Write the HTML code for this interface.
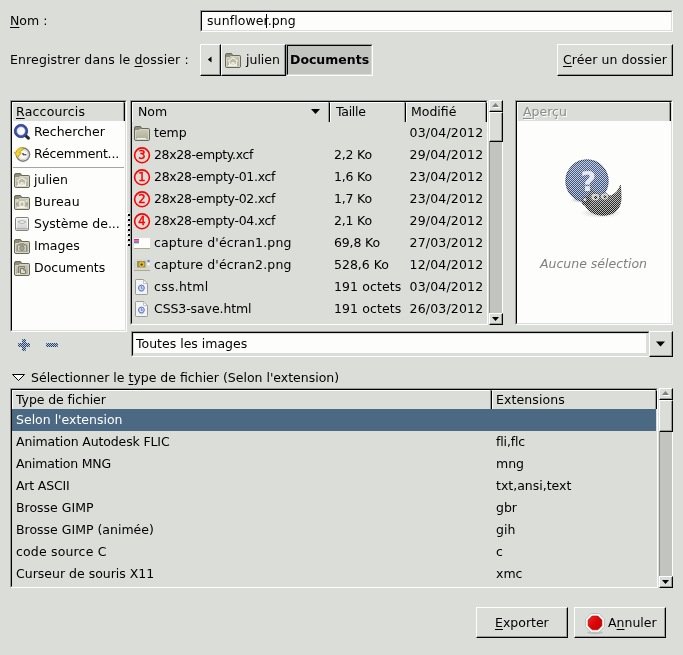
<!DOCTYPE html>
<html lang="fr"><head><meta charset="utf-8"><title>Exporter l'image</title>
<style>
html,body{margin:0;padding:0}
body{width:683px;height:655px;background:#dbddd8;overflow:hidden;position:relative;font:12.5px "DejaVu Sans","Liberation Sans",sans-serif;color:#000}
#w{position:absolute;left:0;top:0;width:683px;height:655px;will-change:transform}
.a{position:absolute;white-space:pre;line-height:16px;height:16px}
.box{position:absolute;box-sizing:border-box}
svg{position:absolute;overflow:visible}
u{text-decoration:underline;text-decoration-thickness:1px;text-underline-offset:2px;text-decoration-skip-ink:none}
.btn{position:absolute;box-sizing:border-box;background:#dbddd8;border-top:1px solid #fff;border-left:1px solid #fff;border-right:1px solid #000;border-bottom:1px solid #000}
.btn:before{content:"";position:absolute;left:0;top:0;right:0;bottom:0;border-right:1px solid #999b96;border-bottom:1px solid #999b96}
.in{position:absolute;box-sizing:border-box;border-top:1px solid #999b96;border-left:1px solid #999b96;border-right:1px solid #fff;border-bottom:1px solid #fff}
.in:before{content:"";position:absolute;left:0;top:0;right:0;bottom:0;border-top:1px solid #000;border-left:1px solid #000;border-right:1px solid #dbddd8;border-bottom:1px solid #dbddd8}
.hdr{position:absolute;box-sizing:border-box;background:#dbddd8;border-right:1px solid #000;border-left:1px solid #fff;border-top:1px solid #fff;height:19px}
.hdr:before{content:"";position:absolute;top:-1px;bottom:0;right:0;width:1px;background:#999b96}
.chk{background-image:conic-gradient(rgba(253,253,251,.7) 25%,transparent 0 50%,rgba(253,253,251,.7) 0 75%,transparent 0);background-size:2px 2px}
.chk2{background-image:conic-gradient(rgba(219,221,216,.85) 25%,transparent 0 50%,rgba(219,221,216,.85) 0 75%,transparent 0);background-size:2px 2px}
.w{color:#fff}
.g{color:#8b8d8a;text-shadow:1px 1px 0 #fff}
</style></head><body><div id="w">
<div class="a " style="left:10px;top:13px;"><u>N</u>om :</div>
<div class="in" style="left:200px;top:10px;width:473px;height:22px;background:#fdfdfb"></div>
<div class="a " style="left:207px;top:13px;letter-spacing:0.1px;">sunflower.png</div>
<div class="box" style="left:266px;top:14px;width:1px;height:14px;background:#000"></div>
<div class="a " style="left:10px;top:52px;letter-spacing:0.125px;">Enregistrer dans le <u>d</u>ossier :</div>
<div class="btn" style="left:200px;top:44px;width:21px;height:32px"></div>
<svg style="left:0;top:0" width="1" height="1"><polygon points="211.5,56.5 211.5,62.5 207.8,59.5" fill="#000"/></svg>
<div class="btn" style="left:221px;top:44px;width:65px;height:32px"></div>
<svg style="left:225px;top:53px" width="16" height="15" viewBox="0 0 16 15"><defs><linearGradient id="fg" x1="0" y1="0" x2="0" y2="1"><stop offset="0" stop-color="#c9c9b6"/><stop offset="1" stop-color="#aeae99"/></linearGradient></defs><path d="M0.5,2 Q0.5,0.5 2,0.5 L6,0.5 Q7.2,0.5 7.6,2.5 L14.5,2.5 Q15.5,2.5 15.5,3.5 L15.5,13 Q15.5,14.5 14,14.5 L2,14.5 Q0.5,14.5 0.5,13 Z" fill="#8e8d79" stroke="#6a6956"/><path d="M1.5,4.5 L4.6,4.5 L6,3.5 L14.5,3.5 L14.5,13.5 L1.5,13.5 Z" fill="url(#fg)" stroke="#d6d6c7" stroke-width="1"/><path d="M3,12.5 H12" stroke="#f4f4ea" stroke-width="1"/><path d="M3.2,8.6 L8,4.9 L12.8,8.6 M4.6,8.2 V12 H7 V9.8 H9 V12 H11.4 V8.2" fill="none" stroke="#f3f3ec" stroke-width="1.3" stroke-linejoin="round"/><path d="M3.2,9.6 L8,5.9 L12.8,9.6" fill="none" stroke="#7c7b68" stroke-width="0.6" opacity=".6"/></svg>
<div class="a " style="left:246px;top:52px;">julien</div>
<div class="in" style="left:286px;top:44px;width:87px;height:32px;background:#c2c4bf"></div>
<div class="a " style="left:290px;top:52px;font-weight:bold">Documents</div>
<div class="btn" style="left:557px;top:44px;width:116px;height:32px"></div>
<div class="a " style="left:563px;top:52px;letter-spacing:0.07px;"><u>C</u>réer un dossier</div>
<div class="in" style="left:10px;top:100px;width:117px;height:232px;background:#fdfdfb"></div>
<div class="hdr" style="left:12px;top:102px;width:113px"></div>
<div class="a " style="left:16px;top:104px;letter-spacing:0.2px;"><u>R</u>accourcis</div>
<svg style="left:14px;top:124px" width="17" height="17" viewBox="0 0 17 17"><defs><linearGradient id="mg" x1="0" y1="0" x2="1" y2="1"><stop offset="0" stop-color="#dfe3ee"/><stop offset=".6" stop-color="#ffffff"/></linearGradient></defs><path d="M11.6,11.6 L14.4,14.2" stroke="#2b2b2b" stroke-width="3.1" stroke-linecap="round"/><circle cx="7" cy="7" r="5.5" fill="url(#mg)" stroke="#3b4fa6" stroke-width="2.6"/><circle cx="7" cy="7" r="6.7" fill="none" stroke="#27357c" stroke-width="0.7"/><circle cx="7" cy="7" r="4.3" fill="none" stroke="#7f8fd0" stroke-width="0.6"/></svg>
<div class="a " style="left:34px;top:124px;">Rechercher</div>
<svg style="left:14px;top:146px" width="17" height="17" viewBox="0 0 17 17"><circle cx="9" cy="8.6" r="6.6" fill="#f6f6f4" stroke="#7d7d7b" stroke-width="1.5"/><circle cx="9" cy="8.6" r="5" fill="none" stroke="#cfcfcd" stroke-width="1"/><path d="M9,8.8 H12.4 M9,8.8 V7" stroke="#2a2a2a" stroke-width="1.1"/><path d="M0.2,6.3 L3.6,11.7 L7.3,6.9 L5.7,6.6 Q5.8,4.300 9.200,3.700 L9.200,1.500 Q3,1.500 2.200,6.200 Z" fill="#f2d22e" stroke="#b0930f" stroke-width="0.7" stroke-linejoin="round"/></svg>
<div class="a " style="left:34px;top:146px;letter-spacing:-0.18px;">Récemment...</div>
<div class="box" style="left:13px;top:167px;width:111px;height:1px;background:#a3a59f"></div>
<svg style="left:14px;top:173px" width="16" height="15" viewBox="0 0 16 15"><defs><linearGradient id="fg" x1="0" y1="0" x2="0" y2="1"><stop offset="0" stop-color="#c9c9b6"/><stop offset="1" stop-color="#aeae99"/></linearGradient></defs><path d="M0.5,2 Q0.5,0.5 2,0.5 L6,0.5 Q7.2,0.5 7.6,2.5 L14.5,2.5 Q15.5,2.5 15.5,3.5 L15.5,13 Q15.5,14.5 14,14.5 L2,14.5 Q0.5,14.5 0.5,13 Z" fill="#8e8d79" stroke="#6a6956"/><path d="M1.5,4.5 L4.6,4.5 L6,3.5 L14.5,3.5 L14.5,13.5 L1.5,13.5 Z" fill="url(#fg)" stroke="#d6d6c7" stroke-width="1"/><path d="M3,12.5 H12" stroke="#f4f4ea" stroke-width="1"/><path d="M3.2,8.6 L8,4.9 L12.8,8.6 M4.6,8.2 V12 H7 V9.8 H9 V12 H11.4 V8.2" fill="none" stroke="#f3f3ec" stroke-width="1.3" stroke-linejoin="round"/><path d="M3.2,9.6 L8,5.9 L12.8,9.6" fill="none" stroke="#7c7b68" stroke-width="0.6" opacity=".6"/></svg>
<div class="a " style="left:34px;top:172px;">julien</div>
<svg style="left:14px;top:195px" width="16" height="15" viewBox="0 0 16 15"><defs><linearGradient id="fg" x1="0" y1="0" x2="0" y2="1"><stop offset="0" stop-color="#c9c9b6"/><stop offset="1" stop-color="#aeae99"/></linearGradient></defs><path d="M0.5,2 Q0.5,0.5 2,0.5 L6,0.5 Q7.2,0.5 7.6,2.5 L14.5,2.5 Q15.5,2.5 15.5,3.5 L15.5,13 Q15.5,14.5 14,14.5 L2,14.5 Q0.5,14.5 0.5,13 Z" fill="#8e8d79" stroke="#6a6956"/><path d="M1.5,4.5 L4.6,4.5 L6,3.5 L14.5,3.5 L14.5,13.5 L1.5,13.5 Z" fill="url(#fg)" stroke="#d6d6c7" stroke-width="1"/><path d="M3,12.5 H12" stroke="#f4f4ea" stroke-width="1"/><rect x="6" y="6.8" width="4" height="4.6" fill="none" stroke="#f3f3ec" stroke-width="1.2"/><path d="M3,6.5 V5.8 H4.2 M13,6.5 V5.8 H11.8 M3,11.5 V12.2 H4.2 M13,11.5 V12.2 H11.8" fill="none" stroke="#f3f3ec" stroke-width="1.1"/><path d="M3,8 V10 M13,8 V10" stroke="#7c7b68" stroke-width="1" opacity=".7"/></svg>
<div class="a " style="left:34px;top:194px;letter-spacing:0.2px;">Bureau</div>
<svg style="left:15px;top:217px" width="14" height="14" viewBox="0 0 14 14"><defs><linearGradient id="hd" x1="0" y1="0" x2="0" y2="1"><stop offset="0" stop-color="#efefed"/><stop offset="1" stop-color="#cfcfcd"/></linearGradient></defs><rect x="0.5" y="0.5" width="13" height="13" rx="1.3" fill="url(#hd)" stroke="#80807e"/><rect x="1.6" y="1.6" width="10.8" height="10.800" rx="0.6" fill="none" stroke="#fafafa" stroke-width="0.9"/><path d="M3,4.600 Q7,2.400 11,4.600 Q7,8.400 3,4.600Z" fill="#f4f4f2" stroke="#a2a2a0" stroke-width="0.8"/><path d="M1.400,11.800 H12.600" stroke="#a9a9a7" stroke-width="1.400"/></svg>
<div class="a " style="left:34px;top:216px;">Système de...</div>
<svg style="left:14px;top:239px" width="16" height="15" viewBox="0 0 16 15"><defs><linearGradient id="fg" x1="0" y1="0" x2="0" y2="1"><stop offset="0" stop-color="#c9c9b6"/><stop offset="1" stop-color="#aeae99"/></linearGradient></defs><path d="M0.5,2 Q0.5,0.5 2,0.5 L6,0.5 Q7.2,0.5 7.6,2.5 L14.5,2.5 Q15.5,2.5 15.5,3.5 L15.5,13 Q15.5,14.5 14,14.5 L2,14.5 Q0.5,14.5 0.5,13 Z" fill="#8e8d79" stroke="#6a6956"/><path d="M1.5,4.5 L4.6,4.5 L6,3.5 L14.5,3.5 L14.5,13.5 L1.5,13.5 Z" fill="url(#fg)" stroke="#d6d6c7" stroke-width="1"/><path d="M3,12.5 H12" stroke="#f4f4ea" stroke-width="1"/><path d="M5.400,6 L6.200,4.800 H9.800 L10.600,6" fill="#d5d5c5" stroke="#77766a" stroke-width="0.900"/><rect x="3.300" y="6" width="9.400" height="6.200" rx="0.800" fill="#d5d5c5" stroke="#77766a" stroke-width="0.900"/><circle cx="8" cy="9.100" r="2.200" fill="#bdbdab" stroke="#6f6e5c" stroke-width="0.900"/><circle cx="8" cy="9.100" r="0.800" fill="#8a8975"/></svg>
<div class="a " style="left:34px;top:238px;">Images</div>
<svg style="left:14px;top:261px" width="16" height="15" viewBox="0 0 16 15"><defs><linearGradient id="fg" x1="0" y1="0" x2="0" y2="1"><stop offset="0" stop-color="#c9c9b6"/><stop offset="1" stop-color="#aeae99"/></linearGradient></defs><path d="M0.5,2 Q0.5,0.5 2,0.5 L6,0.5 Q7.2,0.5 7.6,2.5 L14.5,2.5 Q15.5,2.5 15.5,3.5 L15.5,13 Q15.5,14.5 14,14.5 L2,14.5 Q0.5,14.5 0.5,13 Z" fill="#8e8d79" stroke="#6a6956"/><path d="M1.5,4.5 L4.6,4.5 L6,3.5 L14.5,3.5 L14.5,13.5 L1.5,13.5 Z" fill="url(#fg)" stroke="#d6d6c7" stroke-width="1"/><path d="M3,12.5 H12" stroke="#f4f4ea" stroke-width="1"/><path d="M4.500,12.400 V5.600 H10.500 V7" fill="none" stroke="#77766a" stroke-width="0.900"/><path d="M6.500,12.600 V7.500 H9.700 L11.500,9.300 V12.600 Z" fill="#dcdccf" stroke="#6f6e5c" stroke-width="0.900" stroke-linejoin="round"/><path d="M9.600,7.700 V9.400 H11.300" fill="none" stroke="#6f6e5c" stroke-width="0.700"/></svg>
<div class="a " style="left:34px;top:260px;">Documents</div>
<div class="box" style="left:127px;top:213px;width:2px;height:2px;background:#fdfdfb"></div><div class="box" style="left:128px;top:214px;width:2px;height:2px;background:#000"></div>
<div class="box" style="left:127px;top:218px;width:2px;height:2px;background:#fdfdfb"></div><div class="box" style="left:128px;top:219px;width:2px;height:2px;background:#000"></div>
<div class="box" style="left:127px;top:223px;width:2px;height:2px;background:#fdfdfb"></div><div class="box" style="left:128px;top:224px;width:2px;height:2px;background:#000"></div>
<div class="box" style="left:127px;top:228px;width:2px;height:2px;background:#fdfdfb"></div><div class="box" style="left:128px;top:229px;width:2px;height:2px;background:#000"></div>
<div class="box" style="left:127px;top:233px;width:2px;height:2px;background:#fdfdfb"></div><div class="box" style="left:128px;top:234px;width:2px;height:2px;background:#000"></div>
<div class="box" style="left:127px;top:238px;width:2px;height:2px;background:#fdfdfb"></div><div class="box" style="left:128px;top:239px;width:2px;height:2px;background:#000"></div>
<div class="box" style="left:127px;top:243px;width:2px;height:2px;background:#fdfdfb"></div><div class="box" style="left:128px;top:244px;width:2px;height:2px;background:#000"></div>
<div class="in" style="left:130px;top:100px;width:358px;height:225px"></div>
<div class="hdr" style="left:132px;top:102px;width:198px;height:20px"></div>
<div class="hdr" style="left:330px;top:102px;width:76px;height:20px"></div>
<div class="hdr" style="left:406px;top:102px;width:81px;height:20px"></div>
<div class="a " style="left:138px;top:104px;">Nom</div>
<div class="a " style="left:336px;top:104px;letter-spacing:-0.3px;">Taille</div>
<div class="a " style="left:411px;top:104px;">Modifié</div>
<svg style="left:0;top:0" width="1" height="1"><polygon points="311,109 320,109 315.5,114" fill="#000"/></svg>
<svg style="left:134px;top:126px" width="16" height="15" viewBox="0 0 16 15"><defs><linearGradient id="fg" x1="0" y1="0" x2="0" y2="1"><stop offset="0" stop-color="#c9c9b6"/><stop offset="1" stop-color="#aeae99"/></linearGradient></defs><path d="M0.5,2 Q0.5,0.5 2,0.5 L6,0.5 Q7.2,0.5 7.6,2.5 L14.5,2.5 Q15.5,2.5 15.5,3.5 L15.5,13 Q15.5,14.5 14,14.5 L2,14.5 Q0.5,14.5 0.5,13 Z" fill="#8e8d79" stroke="#6a6956"/><path d="M1.5,4.5 L4.6,4.5 L6,3.5 L14.5,3.5 L14.5,13.5 L1.5,13.5 Z" fill="url(#fg)" stroke="#d6d6c7" stroke-width="1"/><path d="M3,12.5 H12" stroke="#f4f4ea" stroke-width="1"/></svg>
<div class="a " style="left:154px;top:125px;">temp</div>
<div class="a " style="left:409.6px;top:125px;letter-spacing:0.16px;">03/04/2012</div>
<svg style="left:134px;top:147px" width="17" height="17" viewBox="0 0 17 17"><circle cx="8" cy="8.300" r="7.400" fill="none" stroke="#f00" stroke-width="1.600"/><text x="8" y="12.400" text-anchor="middle" font-family="DejaVu Sans,Liberation Sans,sans-serif" font-size="11.500" fill="#f00" stroke="#f00" stroke-width="0.450">3</text></svg>
<div class="a " style="left:154px;top:147px;letter-spacing:-0.36px;">28x28-empty.xcf</div>
<div class="a " style="left:334px;top:147px;letter-spacing:-0.2px;">2,2 Ko</div>
<div class="a " style="left:409.6px;top:147px;letter-spacing:0.16px;">29/04/2012</div>
<svg style="left:134px;top:169px" width="17" height="17" viewBox="0 0 17 17"><circle cx="8" cy="8.300" r="7.400" fill="none" stroke="#f00" stroke-width="1.600"/><text x="8" y="12.400" text-anchor="middle" font-family="DejaVu Sans,Liberation Sans,sans-serif" font-size="11.500" fill="#f00" stroke="#f00" stroke-width="0.450">1</text></svg>
<div class="a " style="left:154px;top:169px;letter-spacing:-0.29px;">28x28-empty-01.xcf</div>
<div class="a " style="left:334px;top:169px;letter-spacing:-0.2px;">1,6 Ko</div>
<div class="a " style="left:409.6px;top:169px;letter-spacing:0.16px;">23/04/2012</div>
<svg style="left:134px;top:191px" width="17" height="17" viewBox="0 0 17 17"><circle cx="8" cy="8.300" r="7.400" fill="none" stroke="#f00" stroke-width="1.600"/><text x="8" y="12.400" text-anchor="middle" font-family="DejaVu Sans,Liberation Sans,sans-serif" font-size="11.500" fill="#f00" stroke="#f00" stroke-width="0.450">2</text></svg>
<div class="a " style="left:154px;top:191px;letter-spacing:-0.29px;">28x28-empty-02.xcf</div>
<div class="a " style="left:334px;top:191px;letter-spacing:-0.2px;">1,7 Ko</div>
<div class="a " style="left:409.6px;top:191px;letter-spacing:0.16px;">23/04/2012</div>
<svg style="left:134px;top:213px" width="17" height="17" viewBox="0 0 17 17"><circle cx="8" cy="8.300" r="7.400" fill="none" stroke="#f00" stroke-width="1.600"/><text x="8" y="12.400" text-anchor="middle" font-family="DejaVu Sans,Liberation Sans,sans-serif" font-size="11.500" fill="#f00" stroke="#f00" stroke-width="0.450">4</text></svg>
<div class="a " style="left:154px;top:213px;letter-spacing:-0.29px;">28x28-empty-04.xcf</div>
<div class="a " style="left:334px;top:213px;letter-spacing:-0.2px;">2,1 Ko</div>
<div class="a " style="left:409.6px;top:213px;letter-spacing:0.16px;">29/04/2012</div>
<svg style="left:134px;top:238px" width="16" height="11" viewBox="0 0 16 11"><rect width="16" height="11" fill="#fdfdfb"/><rect y="10" width="16" height="1" fill="#a9ab8c"/><rect x="0" y="1" width="5" height="1.6" fill="#ee2a6e"/><rect x="0" y="2.6" width="5" height="1.4" fill="#d45ad0"/><rect x="0" y="4" width="5" height="1" fill="#3fae6a"/><rect x="0" y="5" width="5" height="0.8" fill="#f0a8d8"/></svg>
<div class="a " style="left:154px;top:235px;letter-spacing:0.17px;">capture d'écran1.png</div>
<div class="a " style="left:334px;top:235px;letter-spacing:-0.15px;">69,8 Ko</div>
<div class="a " style="left:409.6px;top:235px;letter-spacing:0.16px;">27/03/2012</div>
<svg style="left:134px;top:259px" width="16" height="12" viewBox="0 0 16 12"><rect width="16" height="12" fill="#d9d6cf"/><rect y="11" width="16" height="1" fill="#a9ab8c"/><rect x="3" y="2" width="8.500" height="6.500" fill="#9a8f55"/><circle cx="7.600" cy="5.300" r="2.600" fill="#e3bd2a"/><circle cx="7.600" cy="5.500" r="1.100" fill="#3a2810"/><rect x="13.6" y="1" width="2" height="2" fill="#3b8bea"/><rect x="13.6" y="4" width="2" height="2.4" fill="#fff"/><rect x="0" y="3" width="1.4" height="6" fill="#c5ccd8"/></svg>
<div class="a " style="left:154px;top:257px;letter-spacing:0.17px;">capture d'écran2.png</div>
<div class="a " style="left:334px;top:257px;">528,6 Ko</div>
<div class="a " style="left:409.6px;top:257px;letter-spacing:0.16px;">12/04/2012</div>
<svg style="left:135px;top:279px" width="13" height="16" viewBox="0 0 13 16"><path d="M0.5,1.2 Q0.5,0.5 1.2,0.5 L8.5,0.5 L12.5,4.5 L12.5,14.8 Q12.5,15.5 11.8,15.5 L1.2,15.5 Q0.5,15.5 0.5,14.8 Z" fill="#f4f4f2" stroke="#9b9b98"/><path d="M8.5,0.8 V4.5 H12.2 Z" fill="#fff" stroke="#b5b5b2" stroke-width="0.8"/><circle cx="6.400" cy="9" r="2.900" fill="#d3deF2" stroke="#5272b6" stroke-width="1"/><path d="M6.400,7.200 V9.300 H7.800" fill="none" stroke="#4a6ab0" stroke-width="0.800"/><path d="M4.300,11.800 Q6.400,13 8.500,11.800" fill="none" stroke="#8aa0cf" stroke-width="0.800"/></svg>
<div class="a " style="left:154px;top:279px;letter-spacing:0.26px;">css.html</div>
<div class="a " style="left:334px;top:279px;letter-spacing:0.1px;">191 octets</div>
<div class="a " style="left:409.6px;top:279px;letter-spacing:0.16px;">03/04/2012</div>
<svg style="left:135px;top:301px" width="13" height="16" viewBox="0 0 13 16"><path d="M0.5,1.2 Q0.5,0.5 1.2,0.5 L8.5,0.5 L12.5,4.5 L12.5,14.8 Q12.5,15.5 11.8,15.5 L1.2,15.5 Q0.5,15.5 0.5,14.8 Z" fill="#f4f4f2" stroke="#9b9b98"/><path d="M8.5,0.8 V4.5 H12.2 Z" fill="#fff" stroke="#b5b5b2" stroke-width="0.8"/><circle cx="6.400" cy="9" r="2.900" fill="#d3deF2" stroke="#5272b6" stroke-width="1"/><path d="M6.400,7.200 V9.300 H7.800" fill="none" stroke="#4a6ab0" stroke-width="0.800"/><path d="M4.300,11.800 Q6.400,13 8.500,11.800" fill="none" stroke="#8aa0cf" stroke-width="0.800"/></svg>
<div class="a " style="left:154px;top:301px;letter-spacing:-0.09px;">CSS3-save.html</div>
<div class="a " style="left:334px;top:301px;letter-spacing:0.1px;">191 octets</div>
<div class="a " style="left:409.6px;top:301px;letter-spacing:0.16px;">26/03/2012</div>
<div class="box" style="left:489px;top:100px;width:14px;height:225px;background:#c2c4bf;border-left:1px solid #8f918c;border-right:1px solid #fff"></div>
<div class="btn" style="left:489px;top:100px;width:14px;height:12px"></div>
<svg style="left:0;top:0" width="1" height="1"><polygon points="493,108 500,108 496.5,104" fill="#fff"/><polygon points="492,107 499,107 495.5,103" fill="#7e807c"/></svg>
<div class="btn" style="left:489px;top:112px;width:14px;height:30px"></div>
<div class="btn" style="left:489px;top:313px;width:14px;height:12px"></div>
<svg style="left:0;top:0" width="1" height="1"><polygon points="492,317 499,317 495.5,321" fill="#000"/></svg>
<div class="in" style="left:515px;top:100px;width:158px;height:225px;background:#fdfdfb"></div>
<div class="hdr" style="left:517px;top:102px;width:154px;height:19px"></div>
<div class="a g" style="left:523px;top:104px;"><u style="border-color:#8b8d8a">A</u>perçu</div>
<svg style="left:545px;top:130px" width="100" height="100" viewBox="0 0 100 100">
<defs><linearGradient id="wl" x1="0" y1="0" x2="0.3" y2="1"><stop offset="0" stop-color="#5e5e5c"/><stop offset="1" stop-color="#1c1c1a"/></linearGradient><radialGradient id="sh"><stop offset="0" stop-color="#000" stop-opacity=".35"/><stop offset="1" stop-color="#000" stop-opacity="0"/></radialGradient></defs>
<ellipse cx="56" cy="83" rx="21" ry="5" fill="url(#sh)"/>
<ellipse cx="34" cy="70" rx="9" ry="3" fill="url(#sh)"/>
<defs><linearGradient id="bl" x1="0" y1="0" x2="0" y2="1"><stop offset="0" stop-color="#4c6493"/><stop offset="1" stop-color="#334a78"/></linearGradient></defs><circle cx="42" cy="51" r="21" fill="url(#bl)" stroke="#24365e" stroke-width="1.4"/>
<text x="43.3" y="60.8" text-anchor="middle" font-family="DejaVu Sans,Liberation Sans,sans-serif" font-weight="bold" font-size="27" fill="#fff" fill-opacity=".8">?</text>
<path d="M39.5,72 C40,79 48,85.200 58,85.200 C69,85.200 76,79 76,68 L75.500,55.500 C73,62 69,65.500 63,66.500 L52.500,66.500 L46.500,59.500 C45.500,64 42,68 39.500,72 Z" fill="url(#wl)" stroke="#1a1a1a" stroke-width="1"/>
<path d="M62,77 q2,1.500 4,0" stroke="#222" stroke-width="1.200" fill="none"/>
<ellipse cx="50.300" cy="67" rx="4.300" ry="3.700" fill="#bdbdbd" stroke="#222" stroke-width="0.800"/><circle cx="50.800" cy="67.400" r="1.600" fill="#111"/>
<ellipse cx="59.600" cy="66.400" rx="4.100" ry="3.500" fill="#bdbdbd" stroke="#222" stroke-width="0.800"/><circle cx="60" cy="66.800" r="1.500" fill="#111"/>
<circle cx="41.200" cy="71.200" r="4.700" fill="#1c1c1c"/><circle cx="39.800" cy="69.600" r="1.500" fill="#d0d0d0"/>
</svg>
<div class="box chk" style="left:545px;top:130px;width:100px;height:100px"></div>
<div class="a " style="left:540px;top:256px;font-style:italic;color:#7f817e">Aucune sélection</div>
<svg style="left:18px;top:339px" width="12" height="12" viewBox="0 0 12 12"><rect x="4" y="0" width="4" height="12" rx="1" fill="#254279"/><rect x="0" y="4" width="12" height="4" rx="1" fill="#254279"/></svg>
<svg style="left:46px;top:343px" width="12" height="4" viewBox="0 0 12 4"><rect x="0" y="0" width="12" height="4" rx="1" fill="#254279"/></svg>
<div class="box chk2" style="left:18px;top:339px;width:40px;height:12px"></div>
<div class="in" style="left:131px;top:331px;width:519px;height:26px;background:#dbddd8"></div>
<div class="box" style="left:134px;top:334px;width:512px;height:19px;background:#fdfdfb"></div>
<div class="a " style="left:136px;top:336px;">Toutes les images</div>
<div class="btn" style="left:649px;top:331px;width:24px;height:26px"></div>
<svg style="left:0;top:0" width="1" height="1"><polygon points="656,341.5 665,341.5 660.5,346.5" fill="#000"/></svg>
<svg style="left:0;top:0" width="1" height="1"><polygon points="12.5,374.5 24.5,374.5 18.5,380.5" fill="#fff" stroke="#000" stroke-width="1"/></svg>
<div class="a " style="left:31px;top:370px;">Sélectionner le <u>t</u>ype de fichier (Selon l'extension)</div>
<div class="in" style="left:10px;top:388px;width:648px;height:200px"></div>
<div class="hdr" style="left:12px;top:390px;width:480px"></div>
<div class="hdr" style="left:492px;top:390px;width:165px"></div>
<div class="a " style="left:16px;top:392px;letter-spacing:-0.1px;">Type de fichier</div>
<div class="a " style="left:496px;top:392px;letter-spacing:0.1px;">Extensions</div>
<div class="box" style="left:12px;top:409px;width:644px;height:22px;background:#4b6983"></div>
<div class="a w" style="left:16px;top:412px;">Selon l'extension</div>
<div class="a " style="left:16px;top:434px;letter-spacing:-0.136px;">Animation Autodesk FLIC</div>
<div class="a " style="left:496px;top:434px;letter-spacing:-0.15px;">fli,flc</div>
<div class="a " style="left:16px;top:456px;letter-spacing:-0.2px;">Animation MNG</div>
<div class="a " style="left:496px;top:456px;">mng</div>
<div class="a " style="left:16px;top:478px;letter-spacing:-0.19px;">Art ASCII</div>
<div class="a " style="left:496px;top:478px;">txt,ansi,text</div>
<div class="a " style="left:16px;top:500px;">Brosse GIMP</div>
<div class="a " style="left:496px;top:500px;">gbr</div>
<div class="a " style="left:16px;top:522px;">Brosse GIMP (animée)</div>
<div class="a " style="left:496px;top:522px;">gih</div>
<div class="a " style="left:16px;top:544px;letter-spacing:0.17px;">code source C</div>
<div class="a " style="left:496px;top:544px;">c</div>
<div class="a " style="left:16px;top:566px;">Curseur de souris X11</div>
<div class="a " style="left:496px;top:566px;">xmc</div>
<div class="box" style="left:659px;top:388px;width:14px;height:200px;background:#c2c4bf;border-left:1px solid #8f918c;border-right:1px solid #fff"></div>
<div class="btn" style="left:659px;top:388px;width:14px;height:12px"></div>
<svg style="left:0;top:0" width="1" height="1"><polygon points="663,396 670,396 666.5,392" fill="#fff"/><polygon points="662,395 669,395 665.5,391" fill="#7e807c"/></svg>
<div class="btn" style="left:659px;top:400px;width:14px;height:32px"></div>
<div class="btn" style="left:659px;top:576px;width:14px;height:12px"></div>
<svg style="left:0;top:0" width="1" height="1"><polygon points="662,580 669,580 665.5,584" fill="#000"/></svg>
<div class="btn" style="left:476px;top:607px;width:92px;height:31px"></div>
<div class="a " style="left:495px;top:615px;"><u>E</u>xporter</div>
<div class="btn" style="left:574px;top:607px;width:92px;height:31px"></div>
<svg style="left:585px;top:612px" width="21" height="23" viewBox="0 0 21 23">
<defs><linearGradient id="rd" x1="0" y1="0" x2="1" y2="1"><stop offset="0" stop-color="#ee2a2a"/><stop offset=".5" stop-color="#dc0505"/><stop offset="1" stop-color="#c20000"/></linearGradient></defs>
<ellipse cx="10" cy="20.6" rx="8" ry="1.6" fill="#9a9c98" opacity=".45"/>
<polygon points="6.11,1.50 13.89,1.50 19.40,7.01 19.40,14.79 13.89,20.30 6.11,20.30 0.60,14.79 0.60,7.01" fill="#fdfdfd" stroke="#b9bab5" stroke-width="0.9"/>
<polygon points="7.14,4.00 12.86,4.00 16.90,8.04 16.90,13.76 12.86,17.80 7.14,17.80 3.10,13.76 3.10,8.04" fill="url(#rd)" stroke="#b00000" stroke-width="0.6"/>
</svg>
<div class="a " style="left:608px;top:615px;">A<u>n</u>nuler</div>
</div></body></html>
